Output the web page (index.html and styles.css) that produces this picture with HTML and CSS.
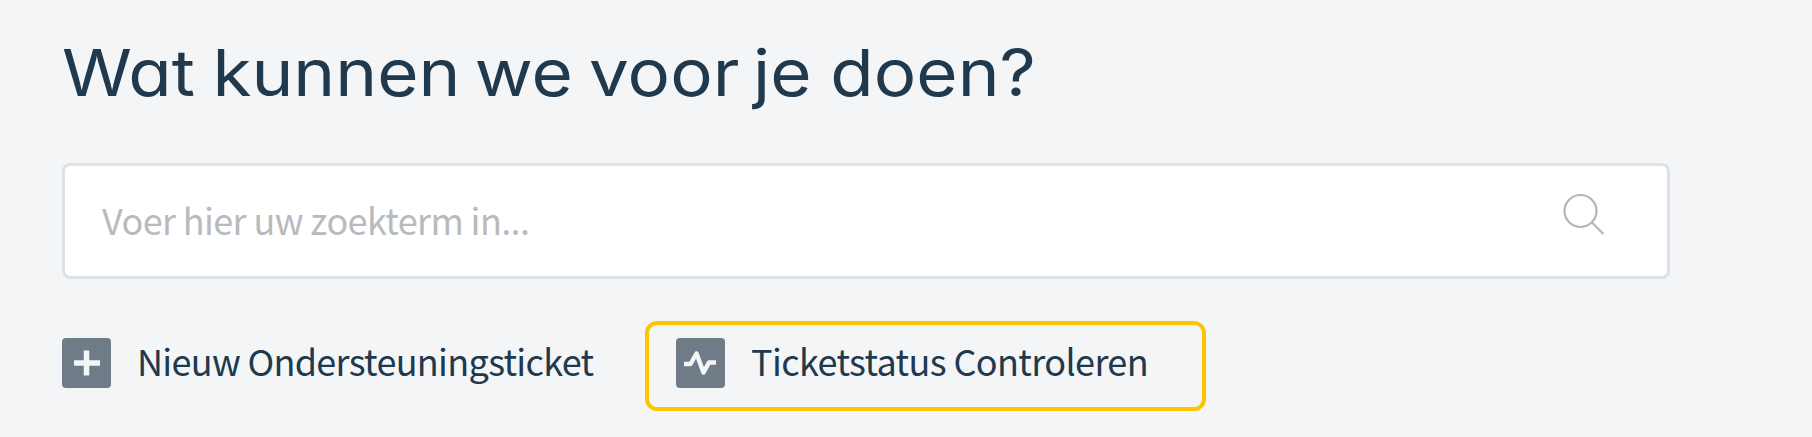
FILE: index.html
```html
<!DOCTYPE html>
<html lang="nl">
<head>
<meta charset="utf-8">
<title>Helpdesk</title>
<link rel="stylesheet" href="styles.css">
</head>
<body>
<main class="portal">
  <h1 class="title"><span class="w-wat">Wat</span> <span class="w-kunnen">kunnen</span> <span class="w-we">we</span> <span class="w-voor">voor</span> <span class="w-je">je</span> <span class="w-doen">doen?</span></h1>
  <form class="search">
    <input class="search-input" type="text" placeholder="Voer hier uw zoekterm in...">
    <svg class="search-icon" width="42" height="44" viewBox="0 0 42 44"><circle cx="17.5" cy="18" r="16" /><path d="M29 29.5L40.500 41" /></svg>
  </form>
  <nav class="links">
    <a class="link">
      <svg class="icon" width="49" height="50" viewBox="0 0 49 50"><rect width="49" height="50" rx="4" fill="#6f7b87"/><path d="M24.500 12.500V37.500M12 25H38" stroke="#f3f5f7" stroke-width="5.500" fill="none"/></svg>
      <span class="link-new">Nieuw Ondersteuningsticket</span>
    </a>
    <a class="link highlighted">
      <svg class="icon" width="49" height="50" viewBox="0 0 49 50"><rect width="49" height="50" rx="4" fill="#6f7b87"/><path d="M8 26H14.500L20.500 15.500L27.500 34.500L33 24.500H40" stroke="#f3f5f7" stroke-width="4.500" stroke-linejoin="round" fill="none"/></svg>
      <span class="link-status">Ticketstatus Controleren</span>
    </a>
  </nav>
</main>
</body>
</html>
```
FILE: styles.css
```css
* { box-sizing: border-box; }
body {
  margin: 0;
  height: 437px;
  overflow: hidden;
  background: #f3f5f7;
  color: #20394d;
  font-family: "Noto Sans CJK SC", "Noto Sans", sans-serif;
}
.portal { padding: 32px 0 0 62px; }
.title {
  display: flex;
  margin: 0;
  width: 1000px;
  height: 131px;
  padding-top: 1px;
  font: 400 64.5px/80px Inter, sans-serif;
  font-feature-settings: "cv11" 1;
  white-space: nowrap;
  transform: scaleX(1.1);
  transform-origin: 0 0;
}
.title span { flex: none; }
.w-wat { width: 136.8px; }
.w-kunnen { width: 238.4px; }
.w-we { width: 104px; }
.w-voor { width: 149px; }
.w-je { width: 70.3px; }
.search {
  display: flex;
  align-items: flex-start;
  width: 1608px;
  height: 116px;
  padding: 0 62px 0 37px;
  background: #fff;
  border: 3px solid #dce2e7;
  border-radius: 8px;
}
.search-input {
  flex: 1;
  height: 105px;
  padding: 0;
  border: 0;
  outline: 0;
  background: transparent;
  font: 400 36px "Noto Sans CJK SC", sans-serif;
  letter-spacing: -0.62px;
}
.search-input::placeholder { color: #b9babd; opacity: 1; }
.search-icon {
  margin-top: 27px;
  fill: none;
  stroke: #b5b6ba;
  stroke-width: 2.2;
}
.links { display: flex; margin-top: 42px; }
.link {
  display: flex;
  align-items: flex-start;
  height: 90px;
  padding-top: 17px;
  font-size: 36px;
  line-height: 50px;
  letter-spacing: -0.7px;
  white-space: nowrap;
}
.link span { margin-top: -3px; }
.link .link-status { letter-spacing: -0.62px; }
.icon { margin-right: 26px; flex: none; }
.link-new { width: 508px; }
.highlighted {
  width: 561px;
  padding: 13px 0 0 27px;
  border: 4px solid #fdc500;
  border-radius: 12px;
}
```
